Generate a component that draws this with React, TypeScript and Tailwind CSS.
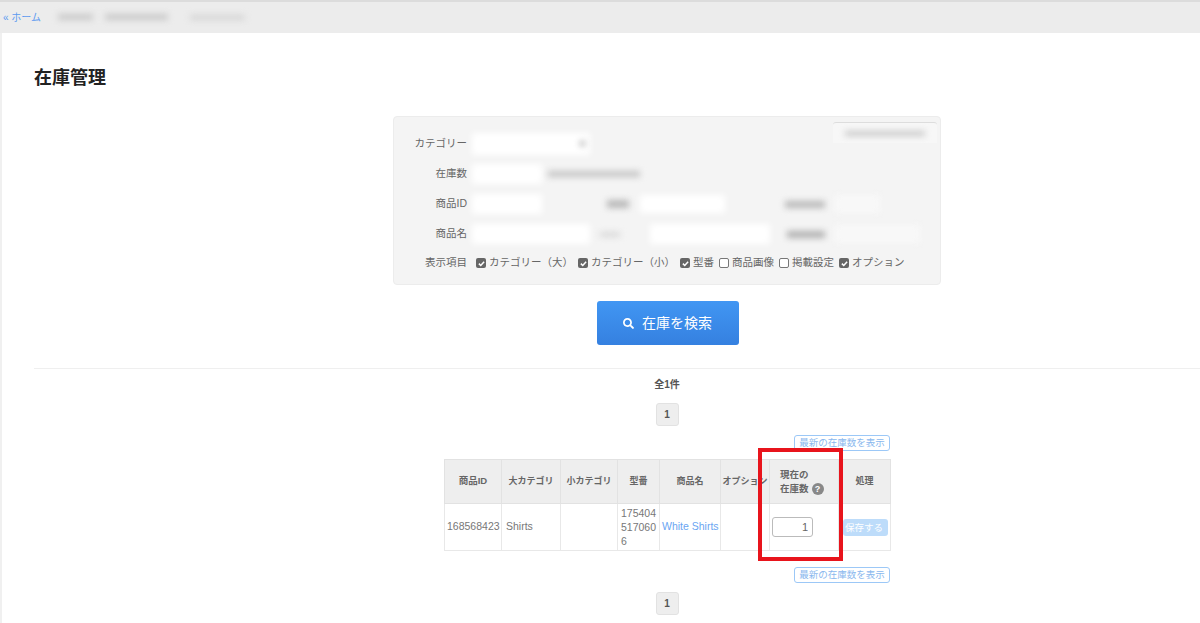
import { FaSearch } from "react-icons/fa";

const font = "font-['Liberation_Sans','Noto_Sans_CJK_JP',sans-serif]";

const Blurred = ({ className }: { className: string }) => <div className={`shrink-0 blur-[3px] ${className}`} />;

const Check = ({ label, checked }: { label: string; checked?: boolean }) => (
  <label className="flex items-center gap-[3px] whitespace-nowrap">
    {checked ? (
      <span className="flex h-[10px] w-[10px] items-center justify-center rounded-[2px] bg-[#666]">
        <svg viewBox="0 0 12 12" className="h-[9px] w-[9px]">
          <path d="M2.5 6.2 5 8.7l4.5-5" fill="none" stroke="#fff" strokeWidth="2" />
        </svg>
      </span>
    ) : (
      <span className="h-[10px] w-[10px] rounded-[2px] border border-[#777] bg-white" />
    )}
    <span>{label}</span>
  </label>
);

const Row = ({ label, children, className }: { label: string; children?: React.ReactNode; className: string }) => (
  <div className={`flex items-center ${className}`}>
    <div className="w-[73px] text-right text-[#666]">{label}</div>
    <div className="flex flex-1 items-center pl-[5px]">{children}</div>
  </div>
);

const RefreshButton = () => (
  <div className="flex justify-end">
    <button className="h-[16px] w-[96px] rounded-[3px] border border-[#9cc8f7] bg-white text-center text-[9.5px] leading-[14px] text-[#8ab8ee]">
      最新の在庫数を表示
    </button>
  </div>
);

const Pager = () => (
  <div className="flex h-[23px] w-[23px] items-center justify-center rounded-[3px] border border-[#e2e2e2] bg-[#eeeeee] text-[10px] font-bold text-[#555]">
    1
  </div>
);

const th = "border border-[#e2e2e2] bg-[#eeeeee] text-center font-bold text-[#666]";
const td = "border border-[#e8e8e8] text-[10.5px]";

export default function App() {
  return (
    <div className={`relative h-[623px] w-[1200px] overflow-hidden bg-white text-[10.5px] ${font}`}>
      <div className="flex h-[33px] items-center border-t-2 border-[#dcdcdc] bg-[#ececec] pb-[1px] pl-[3px]">
        <a className="text-[10px] text-[#5d9bf0]">« ホーム</a>
        <Blurred className="ml-[17px] h-[6px] w-[35px] bg-[#c9c9c9]" />
        <Blurred className="ml-[12px] h-[6px] w-[63px] bg-[#c9c9c9]" />
        <Blurred className="ml-[22px] h-[5px] w-[55px] bg-[#d4d4d4]" />
      </div>

      <div className="w-[1300px] pl-[36px]">
        <h1 className="-ml-[2px] pt-[32px] text-[18px] font-bold leading-[26px] text-[#222]">在庫管理</h1>

        <div className="flex flex-col items-center pr-[2px]">
          <div className="relative mt-[25px] h-[169px] w-[548px] rounded-[4px] border border-[#ececec] bg-[#f4f4f4] pt-[12px]">
            <div className="absolute right-[3px] top-[5px] flex h-[21px] w-[104px] items-center justify-center rounded-t-[3px] border-t border-[#ddd] bg-[#f7f7f7]">
              <Blurred className="h-[5px] w-[80px] bg-[#c8c8c8]" />
            </div>
            <Row label="カテゴリー" className="h-[30px]">
              <div className="relative">
                <Blurred className="h-[22px] w-[118px] bg-white" />
                <Blurred className="absolute right-[5px] top-[8px] h-[5px] w-[5px] bg-[#aaa]" />
              </div>
            </Row>
            <Row label="在庫数" className="h-[30px]">
              <Blurred className="h-[20px] w-[70px] bg-white" />
              <Blurred className="ml-[6px] h-[6px] w-[92px] bg-[#c4c4c4]" />
            </Row>
            <Row label="商品ID" className="h-[30px]">
              <Blurred className="h-[20px] w-[70px] bg-white" />
              <Blurred className="ml-[65px] h-[8px] w-[22px] bg-[#b8b8b8]" />
              <Blurred className="ml-[11px] h-[18px] w-[85px] bg-white" />
              <Blurred className="ml-[60px] h-[7px] w-[40px] bg-[#b8b8b8]" />
              <Blurred className="ml-[10px] h-[18px] w-[45px] bg-[#f8f8f8]" />
            </Row>
            <Row label="商品名" className="h-[30px]">
              <Blurred className="h-[20px] w-[118px] bg-white" />
              <Blurred className="ml-[10px] h-[5px] w-[20px] bg-[#d8d8d8]" />
              <Blurred className="ml-[30px] h-[20px] w-[120px] bg-white" />
              <Blurred className="ml-[17px] h-[7px] w-[38px] bg-[#b0b0b0]" />
              <Blurred className="ml-[10px] h-[18px] w-[85px] bg-[#f8f8f8]" />
            </Row>
            <Row label="表示項目" className="h-[28px]">
              <div className="ml-[4px] flex items-center gap-[5px] text-[#666]">
                <Check checked label="カテゴリー（大）" />
                <Check checked label="カテゴリー（小）" />
                <Check checked label="型番" />
                <Check label="商品画像" />
                <Check label="掲載設定" />
                <Check checked label="オプション" />
              </div>
            </Row>
          </div>

          <button className="ml-[1px] mt-[16px] flex h-[44px] w-[142px] items-center justify-center gap-[8px] rounded-[3px] bg-gradient-to-b from-[#4196f3] to-[#3580e0] text-[14px] text-white">
            <FaSearch size={11} />
            在庫を検索
          </button>
        </div>

        <hr className="-ml-[2px] mt-[23px] border-[#efefef]" />

        <div className="flex flex-col items-center pr-[2px]">
          <div className="mt-[9px] text-[10px] font-bold leading-[14px] text-[#555]">全1件</div>
          <div className="mt-[11px]">
            <Pager />
          </div>

          <div className="mt-[9px] w-[446px]">
            <RefreshButton />
            <table className="mt-[8px] w-[446px] table-fixed border-collapse">
              <colgroup>
                <col className="w-[57px]" />
                <col className="w-[59px]" />
                <col className="w-[57px]" />
                <col className="w-[42px]" />
                <col className="w-[61px]" />
                <col className="w-[49px]" />
                <col className="w-[69px]" />
                <col className="w-[52px]" />
              </colgroup>
              <thead>
                <tr className="h-[44px]">
                  <th className={`${th} text-[9.5px]`}>商品ID</th>
                  <th className={`${th} text-[9px]`}>大カテゴリ</th>
                  <th className={`${th} text-[9px]`}>小カテゴリ</th>
                  <th className={`${th} text-[9px]`}>型番</th>
                  <th className={`${th} text-[9px]`}>商品名</th>
                  <th className={`${th} whitespace-nowrap text-[9px]`}>オプション</th>
                  <th className="border border-[#e2e2e2] bg-[#eeeeee] text-left text-[9.5px] font-bold text-[#666]">
                    <div className="pl-[10px] leading-[14px]">
                      現在の
                      <br />
                      <span className="inline-flex items-center gap-[3px]">
                        在庫数
                        <span className="flex h-[12px] w-[12px] items-center justify-center rounded-full bg-[#888] text-[9px] text-white">?</span>
                      </span>
                    </div>
                  </th>
                  <th className={`${th} text-[9px]`}>処理</th>
                </tr>
              </thead>
              <tbody>
                <tr className="h-[47px]">
                  <td className={`${td} whitespace-nowrap pl-[2px] text-[#777]`}>168568423</td>
                  <td className={`${td} pl-[4px] text-[#777]`}>Shirts</td>
                  <td className={td}></td>
                  <td className={`${td} break-all pl-[3px] leading-[14px] text-[#777]`}>1754045170606</td>
                  <td className={`${td} whitespace-nowrap pl-[2px] text-[#6aa5f2]`}>White Shirts</td>
                  <td className={td}></td>
                  <td className={`${td} pl-[2px]`}>
                    <input
                      readOnly
                      value="1"
                      className="block h-[20px] w-[41px] rounded-[3px] border border-[#bbb] bg-white pr-[4px] text-right text-[11px] text-[#666]"
                    />
                  </td>
                  <td className={`${td} pl-[4px]`}>
                    <span className="block h-[17px] w-[45px] whitespace-nowrap rounded-[3px] bg-[#bddcfa] pl-[2px] text-[9.5px] leading-[17px] text-white">保存する</span>
                  </td>
                </tr>
              </tbody>
            </table>
            <div className="mt-[16px]">
              <RefreshButton />
            </div>
          </div>

          <div className="mt-[9px]">
            <Pager />
          </div>
        </div>
      </div>

      {/* red highlight drawn over the screenshot */}
      <div className="absolute left-[758px] top-[448px] h-[113px] w-[85px] border-[4px] border-[#e8141c]" />
      {/* sliver of the sidebar behind the page */}
      <div className="absolute bottom-0 left-0 top-[33px] w-[2px] bg-[#f0f0f0]" />
    </div>
  );
}
